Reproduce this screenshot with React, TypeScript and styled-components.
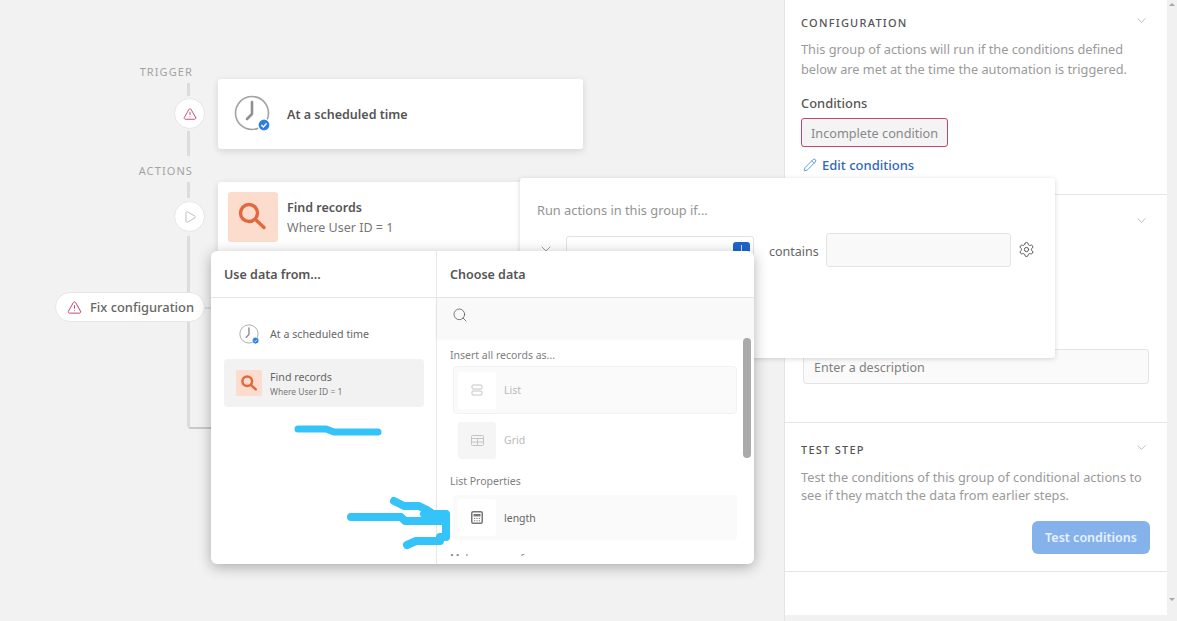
import React, { FunctionComponent } from 'react'
import styled, { createGlobalStyle } from 'styled-components'
import { ChevronDown, Pencil, Play, Search, Settings, TriangleAlert } from 'lucide-react'

const GlobalStyle = createGlobalStyle`
  html, body { margin: 0; padding: 0; background: #f2f2f2; }
  body { font-family: 'Noto Sans', 'Open Sans', sans-serif; color: #4d4d4d; }
  * { box-sizing: border-box; }
`

const Page = styled.div`
  position: relative;
  display: flex;
  width: 1177px;
  height: 621px;
  overflow: hidden;
`
const Canvas = styled.main`
  display: flex;
  flex: 0 0 784px;
  padding-top: 66px;
  background: #f2f2f2;
`
const Rail = styled.div`
  display: flex;
  flex-direction: column;
  align-items: flex-end;
  width: 205px;
`
const RailLabel = styled.div<{ $top?: number }>`
  margin: ${p => p.$top || 0}px 12px 0 0;
  font-size: 11px;
  line-height: 12px;
  letter-spacing: 1.1px;
  color: #a3a3a3;
`
const Connector = styled.div<{ $top: number; $height: number }>`
  width: 3px;
  height: ${p => p.$height}px;
  margin: ${p => p.$top}px 15px 0 0;
  background: #dcdcdc;
`
const ConnectorEnd = styled.div`
  width: 27px;
  height: 193px;
  margin: 4px -9px 0 0;
  border-left: 3px solid #dcdcdc;
  border-bottom: 2px solid #c9c9c9;
  border-bottom-left-radius: 4px;
`
const RailNode = styled.div<{ $top: number }>`
  display: flex;
  align-items: center;
  justify-content: center;
  width: 31px;
  height: 31px;
  margin: ${p => p.$top}px 0 0 0;
  background: #fff;
  border: 1px solid #e6e6e6;
  border-radius: 50%;
`
const Cards = styled.div`
  display: flex;
  flex-direction: column;
  gap: 33px;
  margin: 13px 0 0 13px;
`
const Card = styled.div`
  display: flex;
  align-items: center;
  gap: 9px;
  width: 365px;
  height: 70px;
  padding: 0 10px;
  background: #fff;
  border-radius: 3px;
  box-shadow: 0 2px 7px rgba(0, 0, 0, .13);
`
const CardIcon = styled.div<{ $plain?: boolean }>`
  display: flex;
  align-items: center;
  justify-content: center;
  flex: 0 0 50px;
  height: 50px;
  background: ${p => (p.$plain ? 'transparent' : '#fbdccd')};
  border-radius: 3px;
`
const CardText = styled.div`
  padding-top: 2px;
`
const CardTitle = styled.div`
  font-size: 12.5px;
  line-height: 20px;
  font-weight: 600;
  color: #555;
`
const CardSub = styled.div`
  font-size: 12.5px;
  line-height: 20px;
  color: #777;
`
const FixPill = styled.div`
  position: absolute;
  left: 55px;
  top: 292px;
  display: flex;
  align-items: center;
  gap: 8px;
  width: 150px;
  height: 30px;
  padding-left: 11px;
  background: #fff;
  border: 1px solid #e6e6e6;
  border-radius: 15px;
  font-size: 12.9px;
  font-weight: 500;
  color: #666;
  &::after {
    content: '';
    position: absolute;
    left: 149px;
    top: 14px;
    width: 7px;
    height: 2px;
    background: #dcdcdc;
  }
`

const Sidebar = styled.aside`
  display: flex;
  flex-direction: column;
  flex: 1;
  background: #fff;
  border-left: 1px solid #e4e4e4;
`
const Section = styled.section<{ $height: number; $top: number }>`
  position: relative;
  height: ${p => p.$height}px;
  padding: ${p => p.$top}px 17px 0 16px;
  border-bottom: 1px solid #e6e6e6;
`
const SectionHead = styled.div`
  display: flex;
  align-items: center;
  justify-content: space-between;
  height: 16px;
  padding-right: 1px;
  font-size: 11px;
  font-weight: 500;
  letter-spacing: 1.25px;
  color: #555;
  svg { margin-top: -4px; }
`
const Description = styled.p<{ $top: number; $line: number }>`
  margin: ${p => p.$top}px 0 0;
  font-size: 12.78px;
  line-height: ${p => p.$line}px;
  color: #9a9a9a;
`
const FieldLabel = styled.div`
  margin-top: 15px;
  font-size: 12.9px;
  line-height: 18px;
  font-weight: 500;
  color: #555;
`
const ConditionChip = styled.div`
  width: fit-content;
  margin-top: 6px;
  padding: 0 9px;
  height: 29px;
  line-height: 28px;
  font-size: 12.7px;
  color: #888;
  background: #f5f4f5;
  border: 1px solid #c2466b;
  border-radius: 3px;
`
const EditLink = styled.a`
  display: flex;
  align-items: center;
  gap: 5px;
  margin: 9px 0 0 2px;
  font-size: 13px;
  line-height: 18px;
  font-weight: 500;
  color: #2f68b4;
  svg { color: #4a90d9; }
`
const DescriptionInput = styled.div`
  position: absolute;
  left: 18px;
  top: 154px;
  width: 346px;
  height: 35px;
  padding-left: 10px;
  font-size: 12.5px;
  line-height: 35px;
  color: #808080;
  background: #fafafa;
  border: 1px solid #e4e4e4;
  border-radius: 3px;
`
const ButtonRow = styled.div`
  display: flex;
  justify-content: flex-end;
  margin-top: 17px;
`
const TestButton = styled.div`
  width: 118px;
  height: 33px;
  font-size: 12.5px;
  line-height: 33px;
  font-weight: 600;
  text-align: center;
  color: #e8f1fc;
  background: #86b2ec;
  border-radius: 6px;
`
const ScrollV = styled.div`
  position: relative;
  flex: 0 0 10px;
  background: #f1f1f1;
  &::before, &::after {
    content: '';
    position: absolute;
    left: 2px;
    border-left: 3px solid transparent;
    border-right: 3px solid transparent;
  }
  &::before { top: 3px; border-bottom: 3px solid #a8a8a8; }
  &::after { bottom: 20px; border-top: 3px solid #a8a8a8; }
`
const ScrollH = styled.div`
  position: absolute;
  left: 785px;
  right: 0;
  bottom: 0;
  height: 6px;
  background: #f1f1f1;
`

const ConditionPopover = styled.div`
  position: absolute;
  left: 520px;
  top: 178px;
  width: 535px;
  height: 180px;
  padding: 23px 17px;
  background: #fff;
  border-radius: 3px;
  box-shadow: 0 1px 5px rgba(0, 0, 0, .16);
`
const ConditionTitle = styled.div`
  font-size: 12.8px;
  line-height: 18px;
  color: #949494;
`
const ConditionRow = styled.div`
  display: flex;
  align-items: flex-start;
  margin-top: 14px;
`
const RowChevron = styled.div`
  flex: 0 0 29px;
  padding: 7px 0 0 1px;
  color: #888;
`
const DataInput = styled.div`
  display: flex;
  justify-content: flex-end;
  width: 188px;
  height: 40px;
  margin-top: 3px;
  padding: 5px 3px 0 0;
  border: 1px solid #e2e2e2;
  border-radius: 3px;
`
const PlusButton = styled.div`
  position: relative;
  width: 17px;
  height: 20px;
  background: #1d66c9;
  border-radius: 3px;
  &::after {
    content: '';
    position: absolute;
    left: 8px;
    top: 3px;
    width: 1px;
    height: 14px;
    background: #cfe0f6;
  }
`
const ContainsLabel = styled.div`
  margin: 9px 7px 0 15px;
  font-size: 12.5px;
  line-height: 20px;
  color: #666;
`
const ValueInput = styled.div`
  width: 185px;
  height: 34px;
  background: #f9f9f9;
  border: 1px solid #e4e4e4;
  border-radius: 3px;
`
const GearWrap = styled.div`
  margin: 8px 0 0 7px;
  color: #555;
`

const DataPopover = styled.div`
  position: absolute;
  left: 211px;
  top: 251px;
  display: flex;
  width: 543px;
  height: 313px;
  background: #fff;
  border-radius: 6px;
  box-shadow: 0 3px 14px rgba(0, 0, 0, .3);
  overflow: hidden;
`
const SourceColumn = styled.div`
  flex: 0 0 226px;
  border-right: 1px solid #e8e8e8;
`
const DataColumn = styled.div`
  position: relative;
  flex: 1;
`
const PopHead = styled.div<{ $left: number }>`
  height: 47px;
  padding-left: ${p => p.$left}px;
  font-size: 12.5px;
  line-height: 47px;
  font-weight: 600;
  color: #555;
  border-bottom: 1px solid #e6e6e6;
`
const SourceList = styled.div`
  display: flex;
  flex-direction: column;
  gap: 1px;
  padding: 13px 12px 0 13px;
`
const SourceItem = styled.div<{ $active?: boolean }>`
  display: flex;
  align-items: center;
  gap: ${p => (p.$active ? 8 : 10)}px;
  height: ${p => (p.$active ? 48 : 47)}px;
  padding-left: ${p => (p.$active ? 12 : 15)}px;
  border-radius: 4px;
  background: ${p => (p.$active ? '#f2f2f2' : 'transparent')};
`
const SourceIcon = styled.div`
  display: flex;
  align-items: center;
  justify-content: center;
  flex: 0 0 26px;
  height: 26px;
  background: #fbdccd;
  border-radius: 2px;
`
const SourceTitle = styled.div`
  font-size: 10.7px;
  line-height: 15px;
  color: #666;
`
const SourceSub = styled.div`
  font-size: 8.5px;
  line-height: 13px;
  color: #777;
`
const SourceText = styled.div`
  padding-top: 1px;
`
const SearchBar = styled.div`
  display: flex;
  align-items: flex-start;
  height: 40px;
  padding: 9px 0 0 15px;
  color: #666;
  background: #f9f9f9;
  box-shadow: 0 1px 3px rgba(0, 0, 0, .05);
`
const DataList = styled.div`
  height: 218px;
  padding: 9px 17px 0 13px;
  overflow: hidden;
`
const GroupLabel = styled.div<{ $top?: number; $bottom?: number }>`
  margin: ${p => p.$top || 0}px 0 ${p => p.$bottom || 0}px;
  font-size: 10.5px;
  line-height: 16px;
  white-space: nowrap;
  color: #808080;
`
const DataRow = styled.div<{ $filled?: boolean; $bordered?: boolean; $height: number }>`
  display: flex;
  align-items: center;
  gap: 8px;
  height: ${p => p.$height}px;
  margin: 3px 0 0 3px;
  padding-left: 4px;
  background: ${p => (p.$filled ? '#fafafa' : 'transparent')};
  border: 1px solid ${p => (p.$bordered ? '#f2f2f2' : 'transparent')};
  border-radius: 4px;
`
const TypeIcon = styled.div<{ $muted?: boolean; $disabled?: boolean }>`
  display: flex;
  align-items: center;
  justify-content: center;
  flex: 0 0 38px;
  height: 37px;
  background: ${p => (p.$muted ? '#f5f5f5' : '#fff')};
  border-radius: 3px;
  color: ${p => (p.$disabled ? '#c4c4c4' : '#666')};
`
const RowText = styled.span<{ $disabled?: boolean }>`
  font-size: 10.5px;
  color: ${p => (p.$disabled ? '#b9b9b9' : '#666')};
`
const ScrollThumb = styled.div`
  position: absolute;
  left: 306px;
  top: 87px;
  width: 8px;
  height: 120px;
  background: #aaa;
  border-radius: 4px;
`
const Scribble = styled.svg`
  position: absolute;
  left: 0;
  top: 0;
  pointer-events: none;
`

const ClockIcon: FunctionComponent<{ size: number }> = ({ size }) => (
  <svg width={size} height={size} viewBox="0 0 38 38" fill="none">
    <circle cx="18" cy="18" r="16.5" stroke="#a3a3a3" strokeWidth="1.6" />
    <path d="M18 7v12l-5 5" stroke="#8f8f8f" strokeWidth="2.6" strokeLinecap="round" strokeLinejoin="round" />
    <circle cx="30" cy="30" r="6" fill="#2f7de1" stroke="#fff" strokeWidth="1.2" />
    <path d="M27.4 30l2 2 3.2-3.6" stroke="#fff" strokeWidth="1.4" />
  </svg>
)

const FindIcon: FunctionComponent<{ size: number; width: number }> = ({ size, width }) => (
  <svg width={size} height={size} viewBox="0 0 30 30" fill="none">
    <circle cx="11" cy="11" r="8.5" stroke="#e2693f" strokeWidth={width} />
    <path d="M17.5 17.5l8.5 8" stroke="#e2693f" strokeWidth={width} strokeLinecap="round" />
  </svg>
)

// the small grey type glyphs of the data list
const ListGlyph: FunctionComponent = () => (
  <svg width="12" height="12" viewBox="0 0 12 12" fill="none" stroke="currentColor" strokeWidth="1">
    <rect x="1" y="1" width="10" height="4" rx="1" />
    <rect x="1" y="7" width="10" height="4" rx="1" />
  </svg>
)

const GridGlyph: FunctionComponent = () => (
  <svg width="13" height="11" viewBox="0 0 13 11" fill="none" stroke="currentColor" strokeWidth="1">
    <rect x=".5" y=".5" width="12" height="10" rx="1" />
    <path d="M.5 3.5h12M.5 7h12M6.5 3.5v7" />
  </svg>
)

const CalculatorGlyph: FunctionComponent = () => (
  <svg width="12" height="13" viewBox="0 0 12 13" fill="none">
    <rect x=".75" y=".75" width="10.5" height="11.5" rx="1.5" stroke="#777" strokeWidth="1.5" />
    <rect x="2.5" y="3" width="7" height="2.4" fill="#777" />
    <path d="M3 7.4h1.2M5.4 7.4h1.2M7.8 7.4H9M3 9.8h1.2M5.4 9.8h1.2M7.8 9.8H9" stroke="#777" />
  </svg>
)

const App: FunctionComponent = () => (
  <Page>
    <GlobalStyle />
    <Canvas>
      <Rail>
        <RailLabel>TRIGGER</RailLabel>
        <Connector $top={5} $height={13} />
        <RailNode $top={2}><TriangleAlert size={14} color="#c9436b" strokeWidth={1.6} /></RailNode>
        <Connector $top={2} $height={25} />
        <RailLabel $top={9}>ACTIONS</RailLabel>
        <Connector $top={5} $height={16} />
        <RailNode $top={3}><Play size={14} color="#a8a8a8" strokeWidth={1.3} /></RailNode>
        <ConnectorEnd />
      </Rail>
      <Cards>
        <Card>
          <CardIcon $plain><ClockIcon size={38} /></CardIcon>
          <CardText><CardTitle>At a scheduled time</CardTitle></CardText>
        </Card>
        <Card>
          <CardIcon><FindIcon size={30} width={3.4} /></CardIcon>
          <CardText>
            <CardTitle>Find records</CardTitle>
            <CardSub>Where User ID = 1</CardSub>
          </CardText>
        </Card>
      </Cards>
    </Canvas>
    <FixPill><TriangleAlert size={15} color="#c9436b" strokeWidth={1.6} />Fix configuration</FixPill>

    <Sidebar>
      <Section $height={195} $top={14}>
        <SectionHead>CONFIGURATION<ChevronDown size={15} color="#aaa" strokeWidth={1.2} /></SectionHead>
        <Description $top={9} $line={20}>This group of actions will run if the conditions defined below are met at the time the automation is triggered.</Description>
        <FieldLabel>Conditions</FieldLabel>
        <ConditionChip>Incomplete condition</ConditionChip>
        <EditLink><Pencil size={14} strokeWidth={1.5} />Edit conditions</EditLink>
      </Section>
      <Section $height={228} $top={19}>
        <SectionHead><span />
          <ChevronDown size={15} color="#aaa" strokeWidth={1.2} />
        </SectionHead>
        <DescriptionInput>Enter a description</DescriptionInput>
      </Section>
      <Section $height={149} $top={18}>
        <SectionHead>TEST STEP<ChevronDown size={15} color="#aaa" strokeWidth={1.2} /></SectionHead>
        <Description $top={11} $line={18}>Test the conditions of this group of conditional actions to see if they match the data from earlier steps.</Description>
        <ButtonRow><TestButton>Test conditions</TestButton></ButtonRow>
      </Section>
    </Sidebar>
    <ScrollV />
    <ScrollH />

    <ConditionPopover>
      <ConditionTitle>Run actions in this group if...</ConditionTitle>
      <ConditionRow>
        <RowChevron><ChevronDown size={16} strokeWidth={1.2} /></RowChevron>
        <DataInput><PlusButton /></DataInput>
        <ContainsLabel>contains</ContainsLabel>
        <ValueInput />
        <GearWrap><Settings size={17} strokeWidth={1.4} /></GearWrap>
      </ConditionRow>
    </ConditionPopover>

    <DataPopover>
      <SourceColumn>
        <PopHead $left={13}>Use data from...</PopHead>
        <SourceList>
          <SourceItem>
            <ClockIcon size={21} />
            <SourceTitle>At a scheduled time</SourceTitle>
          </SourceItem>
          <SourceItem $active>
            <SourceIcon><FindIcon size={17} width={4.4} /></SourceIcon>
            <SourceText>
              <SourceTitle>Find records</SourceTitle>
              <SourceSub>Where User ID = 1</SourceSub>
            </SourceText>
          </SourceItem>
        </SourceList>
      </SourceColumn>
      <DataColumn>
        <PopHead $left={13}>Choose data</PopHead>
        <SearchBar><Search size={16} strokeWidth={1.3} /></SearchBar>
        <DataList>
          <GroupLabel>Insert all records as...</GroupLabel>
          <DataRow $filled $bordered $height={48}>
            <TypeIcon $disabled><ListGlyph /></TypeIcon>
            <RowText $disabled>List</RowText>
          </DataRow>
          <DataRow $height={46}>
            <TypeIcon $muted $disabled><GridGlyph /></TypeIcon>
            <RowText $disabled>Grid</RowText>
          </DataRow>
          <GroupLabel $top={10} $bottom={6}>List Properties</GroupLabel>
          <DataRow $filled $height={45}>
            <TypeIcon><CalculatorGlyph /></TypeIcon>
            <RowText>length</RowText>
          </DataRow>
          <GroupLabel $top={10}>Make a copy of...</GroupLabel>
        </DataList>
        <ScrollThumb />
      </DataColumn>
    </DataPopover>

    <Scribble width="1177" height="621" fill="none" stroke="#35c4f9" strokeWidth="7" strokeLinecap="round" strokeLinejoin="round">
      <path d="M298 429h28l8 3h44" />
      <path d="M351 517h50l4 4h41" strokeWidth="8" />
      <path d="M394 501l10 5h15l8 4 6 4h13v23h-6v4h-24l-9 4" strokeWidth="8" />
      <path d="M424 514l4 6h18" strokeWidth="8" />
    </Scribble>
  </Page>
)

export default App
